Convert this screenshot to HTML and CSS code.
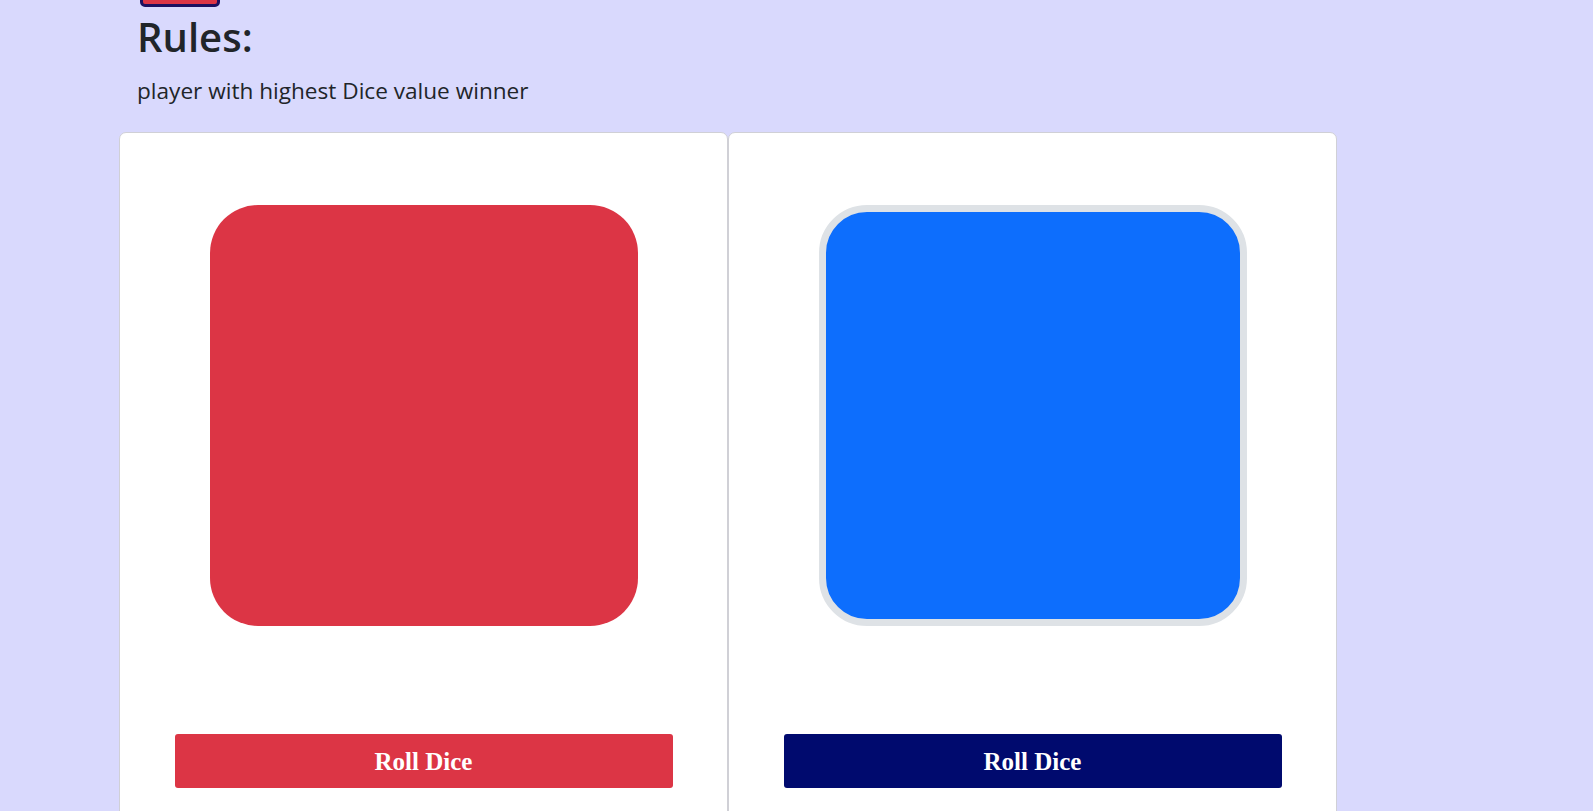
FILE: index.html
```html
<!DOCTYPE html>
<html lang="en">
<head>
<meta charset="utf-8">
<title>Dice Game</title>
<link rel="stylesheet" href="styles.css">
</head>
<body>
<div class="page">
  <div class="top-bar"><button class="top-btn" type="button" aria-label="top"></button></div>
  <section class="rules">
    <h1 class="rules-title">Rules:</h1>
    <p class="rules-text">player with highest Dice value winner</p>
  </section>
  <section class="board">
    <div class="player-card">
      <div class="dice dice-red"></div>
      <button class="roll-btn roll-red" type="button">Roll Dice</button>
    </div>
    <div class="player-card">
      <div class="dice dice-blue"></div>
      <button class="roll-btn roll-navy" type="button">Roll Dice</button>
    </div>
  </section>
</div>
</body>
</html>
```

FILE: styles.css
```css
html, body {
  margin: 0;
  padding: 0;
}
body {
  background: #d9d9fd;
  color: #212529;
  font-family: "Open Sans", "Noto Sans", sans-serif;
  overflow: hidden;
}
.page {
  padding-left: 119px;
}
.top-bar {
  padding-left: 21px;
  height: 7px;
  overflow: hidden;
}
.top-btn {
  display: block;
  width: 80px;
  height: 40px;
  margin-top: -33px;
  background: #dc3545;
  border: 3px solid #1c1060;
  border-radius: 5px;
  padding: 0;
}
.rules {
  padding-left: 18px;
}
.rules-title {
  margin: 6px 0 0;
  font-size: 40px;
  font-weight: 600;
  line-height: 48px;
}
.rules-text {
  margin: 15px 0 0;
  font-size: 22.6px;
  line-height: 30px;
}
.board {
  display: grid;
  grid-template-columns: 609px 609px;
  margin-top: 26px;
}
.player-card {
  background: #fff;
  border: 1px solid #d0d0d6;
  border-radius: 7px;
  height: 760px;
  padding-top: 72px;
  display: flex;
  flex-direction: column;
  align-items: center;
  box-sizing: border-box;
}
.dice {
  width: 428px;
  height: 421px;
  border-radius: 48px;
  box-sizing: border-box;
}
.dice-red {
  background: #dc3545;
}
.dice-blue {
  background: #0d6efd;
  border: 7px solid #dee2e6;
}
.roll-btn {
  margin-top: 108px;
  width: 498px;
  height: 54px;
  border: none;
  border-radius: 3px;
  color: #fff;
  font-family: "Liberation Serif", "Times New Roman", serif;
  font-weight: 700;
  font-size: 25px;
  padding-top: 2px;
  cursor: pointer;
}
.roll-red {
  background: #dc3545;
}
.roll-navy {
  background: #000a6e;
}
```
